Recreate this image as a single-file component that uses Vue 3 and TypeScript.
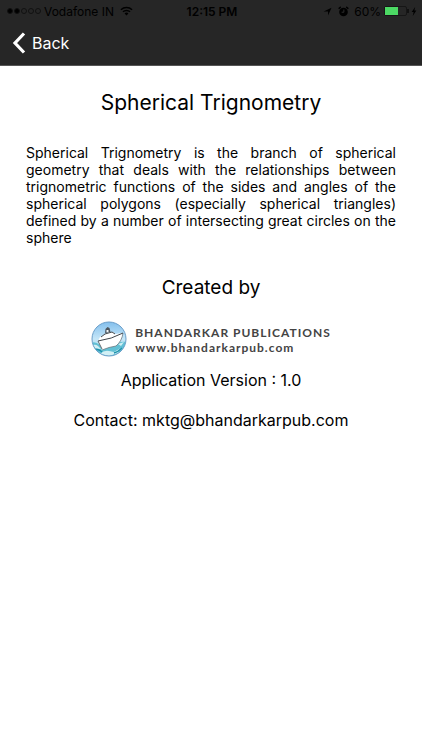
<script setup lang="ts">
const signal: boolean[] = [true, true, false, false, false]
const carrier = 'Vodafone IN'
const clock = '12:15 PM'
const charge = 60
const version = '1.0'
const email = 'mktg@bhandarkarpub.com'

function goBack(): void {
  window.history.back()
}
</script>

<template>
  <div class="page">
    <header class="top">
      <div class="status">
        <div class="status-left">
          <span class="dots">
            <span v-for="(on, i) in signal" :key="i" class="dot" :class="{ on }"></span>
          </span>
          <span>{{ carrier }}</span>
          <svg class="wifi" viewBox="0 0 14 10" aria-hidden="true">
            <path d="M1 3.6a8.6 8.6 0 0 1 12 0M3.2 5.9a5.4 5.4 0 0 1 7.6 0" fill="none" stroke="#000" stroke-width="1.6" />
            <path d="M4.9 7.6a3 3 0 0 1 4.2 0L7 9.8z" fill="#000" />
          </svg>
        </div>
        <span class="clock">{{ clock }}</span>
        <div class="status-right">
          <svg class="arrow" viewBox="0 0 10 10" aria-hidden="true">
            <path d="M9.5.7 5.6 9.4V5H.7z" fill="#000" />
          </svg>
          <svg class="alarm" viewBox="0 0 12 12" aria-hidden="true">
            <circle cx="6" cy="6.5" r="4.7" fill="#000" />
            <path d="M1.2 2.6 2.6 1.4M10.8 2.6 9.4 1.4" stroke="#000" stroke-width="1.6" stroke-linecap="round" />
            <path d="M6.4 3.8v3H4" fill="none" stroke="#303030" stroke-width="1" />
          </svg>
          <span class="percent">{{ charge }}%</span>
          <span class="battery"><span class="level" :style="{ width: charge + '%' }"></span></span>
          <svg class="bolt" viewBox="0 0 6 10" aria-hidden="true">
            <path d="M4.3 0 .4 5.6h2.2L1.6 10 5.6 4H3.4z" fill="#000" />
          </svg>
        </div>
      </div>
      <button class="back" type="button" @click="goBack">
        <svg class="chevron" viewBox="0 0 14 22" aria-hidden="true">
          <path d="M12 1.5 3 11l9 9.5" fill="none" stroke="#fff" stroke-width="3.2" />
        </svg>
        <span>Back</span>
      </button>
    </header>

    <main class="content">
      <h1 class="title">Spherical Trignometry</h1>
      <p class="about">
        Spherical Trignometry is the branch of spherical geometry that deals with the relationships
        between trignometric functions of the sides and angles of the spherical polygons (especially
        spherical triangles) defined by a number of intersecting great circles on the sphere
      </p>
      <h2 class="created">Created by</h2>
      <div class="brand">
        <svg class="emblem" viewBox="0 0 36 36" aria-hidden="true">
          <defs>
            <linearGradient id="sky" x1="0" y1="0" x2="0" y2="1">
              <stop offset="0" stop-color="#7fbdec" />
              <stop offset=".5" stop-color="#c5e6f8" />
              <stop offset="1" stop-color="#9fd6ea" />
            </linearGradient>
            <clipPath id="disc"><circle cx="18" cy="18" r="17" /></clipPath>
          </defs>
          <g clip-path="url(#disc)">
            <path d="M0 0h36v36H0z" fill="url(#sky)" />
            <path d="M0 22q4-2 9 2l10 2 8-4q4-2 9-1v16H0z" fill="#62c0d4" />
            <path d="M1 24q4-1 6 1l3 3q-5-1-8 1zM9 33q4-4 9-3l5 1 7-4-3 5-9 3zM27 23l6-2-3 4z" fill="#d2f0f5" />
            <path d="M3 28q5 0 8 3M23 32q4-1 8-5" fill="none" stroke="#1e93ac" stroke-width="1.4" />
            <path d="M7 20 9 16l5-3 3-2h5l2 2 8-1q-1 8-7 13-7 1-14 4z" fill="#fff" />
            <path d="M32 12q-1 8-7 13-7 1-14 4" fill="none" stroke="#6d7880" stroke-width=".8" />
            <path d="M7 20q14-2 25-8" fill="none" stroke="#3d4349" stroke-width="1" />
            <path d="m7 20 4 8" stroke="#515960" stroke-width=".9" />
            <path d="m10 16 4-3 7-2 3 2" fill="none" stroke="#42474b" stroke-width="1" />
            <path d="m14 12 .5-4L16.500 6l2 1 1 4z" fill="#4c555d" />
            <path d="M15.500 9h2v2h-2z" fill="#f2f6f8" />
          </g>
          <circle cx="18" cy="18" r="17" fill="none" stroke="#6b9ec9" stroke-width="1" />
        </svg>
        <div class="brand-text">
          <span class="brand-name">BHANDARKAR PUBLICATIONS</span>
          <span class="brand-site">www.bhandarkarpub.com</span>
        </div>
      </div>
      <p class="line">Application Version : {{ version }}</p>
      <p class="line">Contact: {{ email }}</p>
    </main>
  </div>
</template>

<style>
body {
  background: #fff;
}
</style>

<style scoped>
.page {
  color: #000;
  font-family: Inter, "Liberation Sans", sans-serif;
}
.top {
  background: #262626;
  border-bottom: 1px solid #555;
}
.status {
  display: grid;
  grid-template-columns: 1fr auto 1fr;
  align-items: center;
  height: 22px;
  padding: 0 5px 0 7px;
  font-size: 12px;
}
.status-left,
.status-right {
  display: flex;
  align-items: center;
}
.status-left {
  gap: 3px;
}
.wifi {
  width: 13px;
  height: 10px;
  margin-left: 3px;
}
.status-right {
  justify-content: flex-end;
}
.dots {
  display: flex;
  gap: 1px;
}
.dot {
  box-sizing: border-box;
  width: 6px;
  height: 6px;
  border: 1px solid #111;
  border-radius: 50%;
}
.dot.on {
  background: #000;
}
.clock {
  font-weight: 600;
}
.arrow {
  width: 9px;
  height: 9px;
  margin-right: 6px;
}
.alarm {
  width: 11px;
  height: 11px;
  margin-right: 5px;
}
.percent {
  margin-right: 3px;
}
.battery {
  position: relative;
  box-sizing: border-box;
  width: 23px;
  height: 10px;
  margin-right: 4px;
  border: 1px solid #161616;
  border-radius: 2px;
}
.battery::after {
  content: "";
  position: absolute;
  top: 2px;
  right: -3px;
  width: 2px;
  height: 4px;
  background: #111;
}
.level {
  display: block;
  height: 100%;
  background: #4cd964;
}
.bolt {
  width: 6px;
  height: 9px;
}
.back {
  display: flex;
  align-items: center;
  gap: 6px;
  height: 42px;
  margin-bottom: 1px;
  padding: 0 12px;
  border: 0;
  background: none;
  color: #fff;
  font: inherit;
  font-size: 16px;
  cursor: pointer;
}
.chevron {
  width: 14px;
  height: 22px;
}
.content {
  display: flex;
  flex-direction: column;
  align-items: center;
  padding: 22px 26px;
}
.title {
  margin: 0 0 26px;
  font-size: 21px;
  font-weight: 400;
  line-height: 30px;
}
.about {
  margin: 0 0 28px;
  font-size: 14px;
  line-height: 17px;
  text-align: justify;
}
.created {
  margin: 0 0 19px;
  font-size: 19px;
  font-weight: 400;
  line-height: 28px;
}
.brand {
  display: flex;
  align-items: center;
  gap: 8px;
  margin-bottom: 11px;
}
.emblem {
  width: 36px;
  height: 36px;
}
.brand-text {
  display: flex;
  flex-direction: column;
  padding-top: 2px;
  color: #444;
  font-family: Lato, sans-serif;
  font-weight: 700;
  letter-spacing: 1px;
}
.brand-name {
  font-size: 12px;
  line-height: 15px;
}
.brand-site {
  font-size: 12px;
  line-height: 15px;
}
.line {
  margin: 0 0 16px;
  font-size: 16px;
  line-height: 24px;
}
</style>
